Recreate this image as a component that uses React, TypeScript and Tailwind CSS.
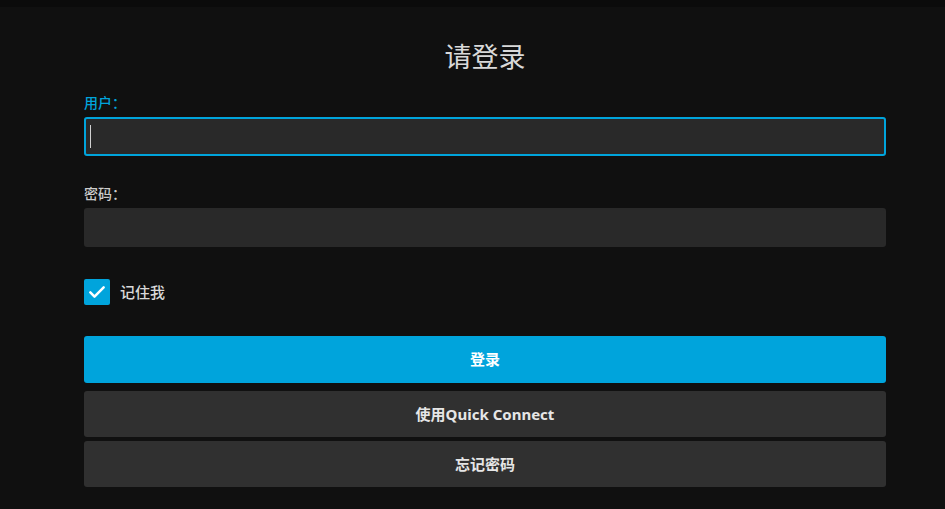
import { useState } from 'react'

const font = { fontFamily: '"Noto Sans", "Noto Sans CJK SC", sans-serif' }

export default function App() {
  const [remember, setRemember] = useState(true)

  return (
    <div className="min-h-[509px] bg-[#101010] text-[#e0e0e0]" style={font}>
      <div className="h-[7px] bg-[#0b0b0b]"></div>

      <form className="ml-[84px] w-[802px]" onSubmit={(e) => e.preventDefault()}>
        <h1 className="mt-[34px] text-center text-[27px] font-normal leading-[31px] text-[#d9d9d9]">请登录</h1>

        {/* User */}
        <label className="mt-[22px] block text-[14px] font-medium leading-[18px] text-[#00a4dc]">用户：</label>
        <div className="relative mt-[5px]">
          <input
            type="text"
            className="block h-[39px] w-full rounded-[3px] border-2 border-[#00a4dc] bg-[#292929] px-[5px] text-[15px] text-white caret-transparent outline-none"
          />
          {/* caret */}
          <span className="absolute left-[6px] top-[8px] h-[23px] w-px bg-[#d0d0d0]"></span>
        </div>

        {/* Password */}
        <label className="mt-[29px] block text-[14px] font-medium leading-[18px] text-[#cccccc]">密码：</label>
        <input
          type="password"
          className="mt-[5px] block h-[39px] w-full rounded-[3px] border-2 border-[#292929] bg-[#292929] px-[5px] text-[15px] text-white outline-none"
        />

        {/* Remember me */}
        <label className="mt-[32px] flex h-[26px] cursor-pointer items-center">
          <span
            onClick={() => setRemember(!remember)}
            className={`flex h-[26px] w-[26px] items-center justify-center rounded-[2px] ${remember ? 'bg-[#00a4dc]' : 'border-2 border-[#999]'}`}
          >
            {remember && (
              <svg viewBox="0 0 24 24" className="h-[20px] w-[20px]" fill="none" stroke="white" strokeWidth="3" strokeLinecap="round" strokeLinejoin="round">
                <path d="M4 12.5l5 5L20 6.5" />
              </svg>
            )}
          </span>
          <span className="ml-[10px] text-[15px] font-medium text-[#d9d9d9]">记住我</span>
        </label>

        {/* Buttons */}
        <button type="submit" className="mt-[31px] block h-[47px] w-full rounded-[3px] bg-[#00a4dc] text-[15px] font-bold text-white">
          登录
        </button>
        <button type="button" className="mt-[8px] block h-[46px] w-full rounded-[3px] bg-[#303030] text-[15px] font-bold text-[#e6e6e6]">
          使用Quick Connect
        </button>
        <button type="button" className="mt-[4px] block h-[46px] w-full rounded-[3px] bg-[#303030] text-[15px] font-bold text-[#e6e6e6]">
          忘记密码
        </button>
      </form>
    </div>
  )
}
